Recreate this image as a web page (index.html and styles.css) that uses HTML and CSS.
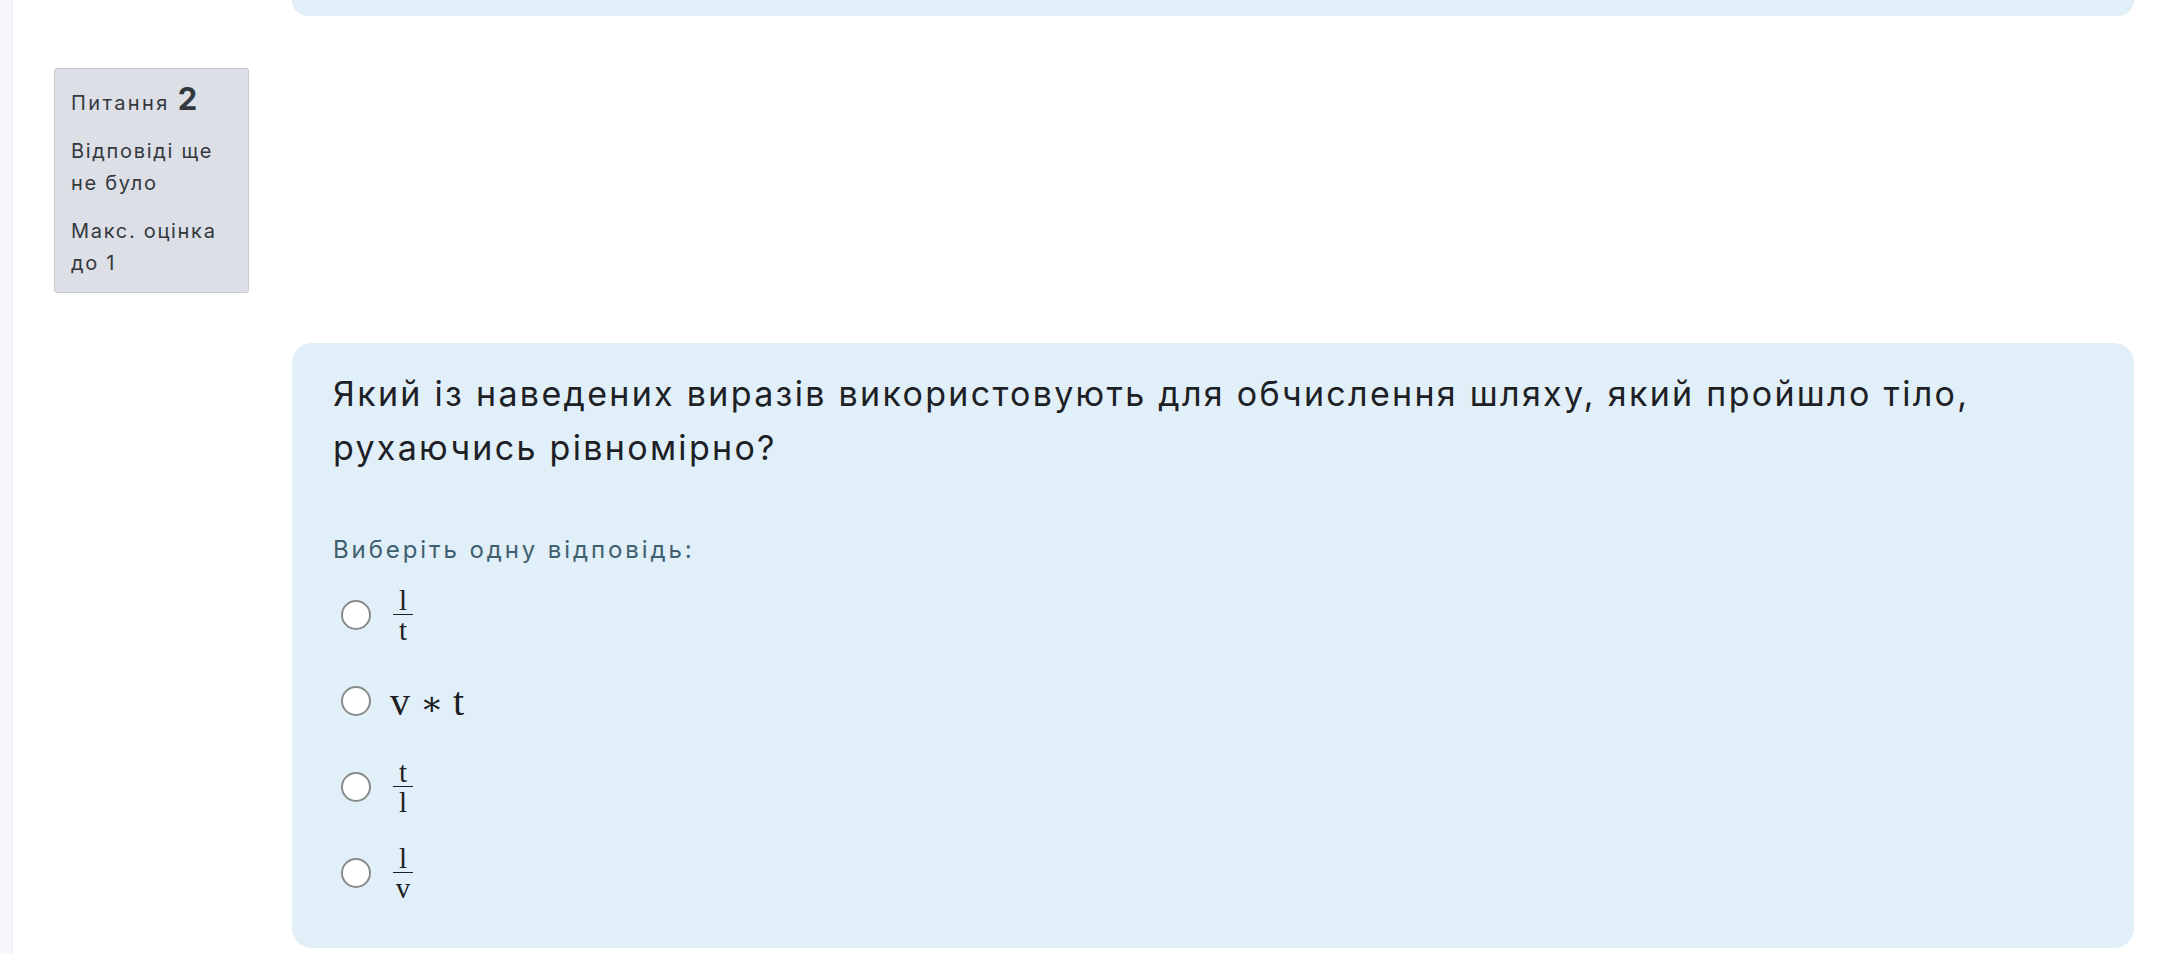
FILE: index.html
```html
<!DOCTYPE html>
<html lang="uk">
<head>
  <meta charset="UTF-8">
  <title>Тест</title>
  <link rel="stylesheet" href="styles.css">
</head>
<body>
  <div class="layout">
    <aside class="drawer-edge"></aside>

    <main class="region">
      <div class="que que-prev">
        <div></div>
        <div class="formulation formulation-tail"></div>
      </div>

      <div class="que">
        <div class="info">
          <h3 class="no">Питання <span class="qno">2</span></h3>
          <div class="state">Відповіді ще не було</div>
          <div class="grade">Макс. оцінка до 1</div>
        </div>

        <div class="content">
          <div class="formulation">
            <div class="qtext">
              Який із наведених виразів використовують для обчислення шляху, який пройшло тіло, рухаючись рівномірно?
            </div>

            <div class="ablock">
              <div class="prompt">Виберіть одну відповідь:</div>
              <div class="answer">
                <label class="option">
                  <input type="radio" name="q2">
                  <span class="frac"><span class="num">l</span><span class="den">t</span></span>
                </label>
                <label class="option">
                  <input type="radio" name="q2">
                  <span class="expr">v <span class="op">∗</span> t</span>
                </label>
                <label class="option">
                  <input type="radio" name="q2">
                  <span class="frac"><span class="num">t</span><span class="den">l</span></span>
                </label>
                <label class="option">
                  <input type="radio" name="q2">
                  <span class="frac"><span class="num">l</span><span class="den">v</span></span>
                </label>
              </div>
            </div>
          </div>
        </div>
      </div>
    </main>
  </div>
</body>
</html>
```

FILE: styles.css
```css
body {
  margin: 0;
  background-color: #fff;
  font-family: Inter, "Noto Sans", sans-serif;
  color: #1d2125;
}

.layout {
  display: flex;
  min-height: 100vh;
}

.drawer-edge {
  width: 12px;
  flex-shrink: 0;
  background-color: #f5f7fb;
  border-right: 1px solid #e9ecf1;
}

.region {
  flex: 1;
  overflow: hidden;
  height: 954px;
}

.que {
  display: grid;
  grid-template-columns: 195px 1fr;
  column-gap: 43px;
  padding: 0 33px 0 41px;
}

.que-prev {
  margin-bottom: 52px;
}

.formulation {
  background-color: #e1eff8;
  border-radius: 20px;
  padding: 24px 41px 32px;
}

.formulation-tail {
  height: 16px;
  padding: 0;
  border-radius: 0 0 20px 20px;
}

/* блок з інформацією про питання */
.info {
  align-self: start;
  background-color: #dcdfe5;
  border: 1px solid #c6c9cf;
  border-radius: 3px;
  padding: 14px 16px 13px;
  font-size: 20px;
  line-height: 32px;
  letter-spacing: 1.7px;
  color: #33383e;
}

.info .no {
  margin: 0;
  font-size: 20px;
  font-weight: 400;
  line-height: 32px;
  letter-spacing: 2.4px;
}

.info .qno {
  font-size: 31px;
  font-weight: 700;
  letter-spacing: 0;
}

.info .state,
.info .grade {
  margin-top: 16px;
}

.content {
  padding-top: 275px;
}

.qtext {
  font-size: 34px;
  line-height: 54px;
  letter-spacing: 2.3px;
  color: #1d2125;
}

.prompt {
  margin-top: 58px;
  font-size: 24px;
  line-height: 34px;
  letter-spacing: 2.9px;
  color: #3f6070;
}

.answer {
  display: flex;
  flex-direction: column;
  margin-top: 5px;
}

.option {
  display: flex;
  align-items: center;
  height: 86px;
  padding-left: 8px;
}

.option input {
  appearance: none;
  width: 30px;
  height: 30px;
  margin: 0 22px 0 0;
  border: 2.5px solid #8a8b8d;
  border-radius: 50%;
  background-color: #fff;
  box-sizing: border-box;
}

/* формули */
.frac {
  display: inline-flex;
  flex-direction: column;
  align-items: center;
  font-family: "Liberation Serif", "DejaVu Serif", serif;
  font-size: 29px;
  line-height: 24px;
}

.frac .num {
  padding: 0 6px 2px;
  border-bottom: 1.7px solid #1d2125;
}

.frac .den {
  padding-top: 3px;
}

.expr {
  font-family: "Liberation Serif", "DejaVu Serif", serif;
  font-size: 40px;
  margin-left: -3px;
}

.expr .op {
  font-size: 34px;
}
```
